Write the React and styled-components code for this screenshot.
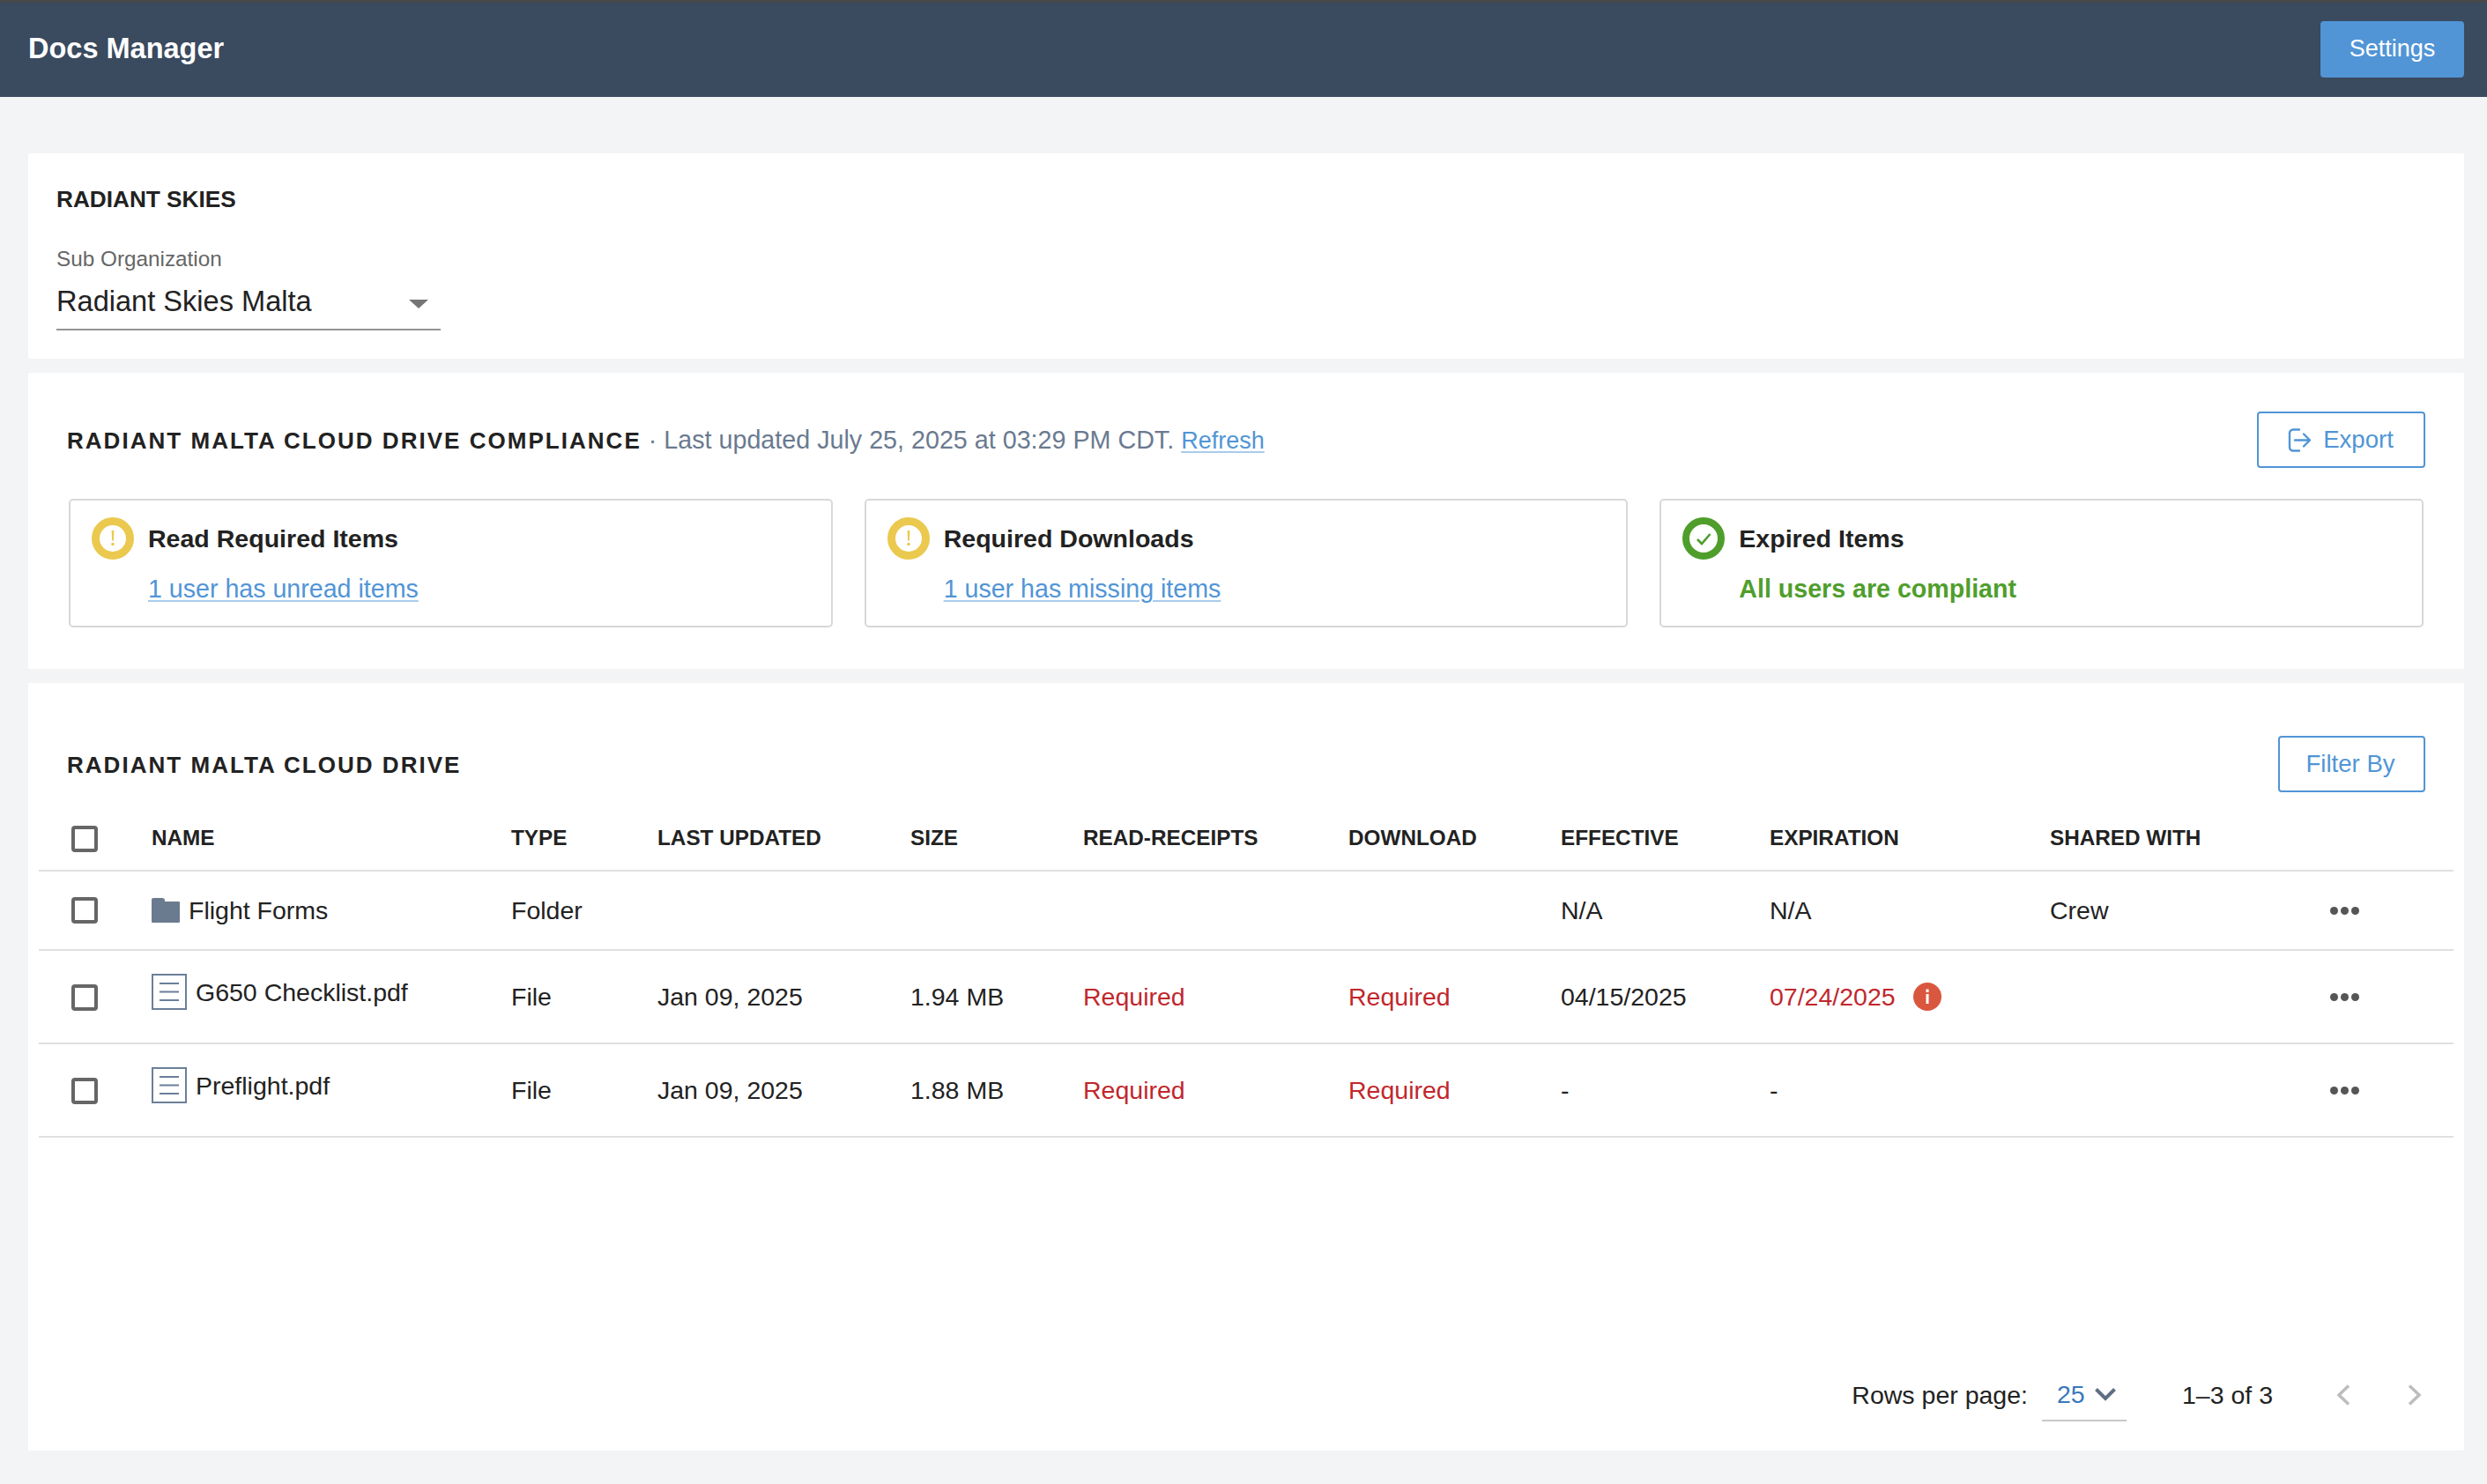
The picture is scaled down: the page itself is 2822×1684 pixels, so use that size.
import styled, { createGlobalStyle } from 'styled-components';

const GlobalStyle = createGlobalStyle`
  html, body {
    margin: 0;
    padding: 0;
    background: #f3f4f6;
    font-family: "Liberation Sans", Arial, sans-serif;
    color: #222;
  }
  * { box-sizing: border-box; }
`;

const Page = styled.div`
  width: 2822px;
  height: 1684px;
  overflow: hidden;
  background: #f3f4f6;
`;

const TopBar = styled.header`
  height: 110px;
  background: #3a4a5f;
  border-top: 3px solid #47494a;
  padding: 0 26px 0 32px;
  display: flex;
  align-items: center;
  justify-content: space-between;
`;

const AppName = styled.div`
  color: #fff;
  font-weight: 700;
  font-size: 32.5px;
  margin-top: -3px;
`;

const SettingsButton = styled.button`
  width: 163px;
  height: 64px;
  margin-top: -2px;
  border: 0;
  border-radius: 4px;
  background: #5195d6;
  color: #fff;
  font: 27px "Liberation Sans", Arial, sans-serif;
`;

const Main = styled.main`
  padding: 64px 26px 0 32px;
  display: flex;
  flex-direction: column;
  gap: 16px;
`;

const Panel = styled.section`
  background: #fff;
  border-radius: 2px;
  height: ${(p) => p.$height}px;
  display: flex;
  flex-direction: column;
`;

const OrgPanel = styled(Panel)`
  padding: 37px 32px 0;
`;

const OrgTitle = styled.h2`
  margin: 0;
  font-size: 26.2px;
  line-height: 30px;
  font-weight: 700;
  color: #222;
`;

const FieldLabel = styled.div`
  margin-top: 38px;
  font-size: 24.3px;
  line-height: 30px;
  color: #666;
`;

const OrgSelect = styled.div`
  margin-top: 2px;
  width: 436px;
  height: 64px;
  border-bottom: 2px solid #949494;
  display: flex;
  align-items: center;
  justify-content: space-between;
  padding-right: 14px;
  font-size: 32.6px;
  color: #222;
`;

const Caret = styled.span`
  width: 0;
  height: 0;
  margin-top: 6px;
  border-left: 11px solid transparent;
  border-right: 11px solid transparent;
  border-top: 10px solid #757575;
`;

const HeadingRow = styled.div`
  display: flex;
  align-items: center;
  justify-content: space-between;
  padding: ${(p) => p.$top}px 44px 0 44px;
`;

const SectionTitle = styled.h2`
  margin: ${(p) => p.$drop || 0}px 0 0;
  display: inline;
  font-size: 26px;
  font-weight: 700;
  letter-spacing: 2.03px;
  color: #222;
`;

const Updated = styled.span`
  font-size: 28.7px;
  color: #6a7a90;
`;

const TextLink = styled.a`
  color: #5195d6;
  font-size: ${(p) => p.$size || 28.6}px;
  text-decoration: underline;
  text-decoration-color: #a9cbec;
  text-decoration-thickness: 2px;
  text-underline-offset: 3px;
`;

const OutlineButton = styled.button`
  width: ${(p) => p.$width}px;
  height: 64px;
  border: 2px solid #5195d6;
  border-radius: 4px;
  background: #fff;
  color: #5195d6;
  font: 27.6px "Liberation Sans", Arial, sans-serif;
  display: flex;
  align-items: center;
  justify-content: center;
  gap: 13px;
  padding-left: ${(p) => p.$shift || 0}px;
`;

const Cards = styled.div`
  margin-top: 35px;
  padding: 0 46px;
  display: grid;
  grid-template-columns: repeat(3, 1fr);
  gap: 36px;
`;

const Card = styled.div`
  height: 146px;
  border: 2px solid #d8d8d8;
  border-radius: 5px;
  padding: 19px 24px 0;
  display: flex;
  gap: 16px;
`;

const CardTitle = styled.div`
  font-size: 28.55px;
  line-height: 48px;
  font-weight: 700;
  color: #222;
`;

const CardNote = styled.div`
  margin-top: 17px;
  line-height: 32px;
  font-size: 28.6px;
`;

const Compliant = styled.span`
  color: #4f9e2c;
  font-weight: 700;
`;

const columns = '128px 408px 166px 287px 196px 301px 241px 237px 318px 315px 1fr';

const Table = styled.div`
  margin: 0 12px;
`;

const Row = styled.div`
  display: grid;
  grid-template-columns: ${columns};
  align-items: center;
  height: ${(p) => p.$height}px;
  padding-top: ${(p) => p.$top || 0}px;
  border-bottom: 2px solid #e0e0e0;
  font-size: 28.5px;
`;

const HeadCell = styled.div`
  font-size: 24.3px;
  font-weight: 700;
  color: #222;
`;

const Cell = styled.div`
  color: ${(p) => (p.$alert ? '#c1272d' : '#222')};
  display: flex;
  align-items: center;
  gap: 20px;
`;

const CheckCell = styled.div`
  padding-left: 37px;
  padding-top: ${(p) => p.$nudge || 0}px;
  display: flex;
`;

const Checkbox = styled.span`
  width: 30px;
  height: 30px;
  border: 4px solid #666;
  border-radius: 4px;
  background: #fff;
`;

const NameCell = styled.div`
  display: flex;
  align-items: center;
  gap: ${(p) => (p.$file ? 10 : 10)}px;
  padding-bottom: ${(p) => (p.$file ? 11 : 0)}px;
  color: #222;
`;

const FileName = styled.span`
  margin-top: ${(p) => (p.$file ? 2 : 0)}px;
`;

const Dots = styled.div`
  display: flex;
  gap: 3px;
  padding-left: 3px;
`;

const Dot = styled.span`
  width: 9px;
  height: 9px;
  border-radius: 50%;
  background: #555;
`;

const Pager = styled.div`
  margin-top: auto;
  margin-bottom: 33px;
  height: 60px;
  padding-right: 48px;
  display: flex;
  align-items: center;
  justify-content: flex-end;
  font-size: 28.5px;
  color: #222;
`;

const RowsSelect = styled.div`
  width: 96px;
  height: 60px;
  margin: 0 63px 0 16px;
  padding-left: 17px;
  border-bottom: 2px solid #c8c8c8;
  color: #3a78bd;
  display: flex;
  align-items: center;
  gap: 11px;
`;

const PagerIcon = styled.svg`
  display: block;
  margin-left: ${(p) => p.$left}px;
`;

function ExportIcon() {
  return (
    <svg width="27" height="27" viewBox="0 0 27 27" fill="none" stroke="#5195d6" strokeWidth="2.4" strokeLinecap="round" strokeLinejoin="round">
      <path d="M13 1.5H6a4 4 0 0 0-4 4v16a4 4 0 0 0 4 4h7" />
      <path d="M8 13.5h17M18 6.5l7 7-7 7" />
    </svg>
  );
}

function WarnIcon() {
  return (
    <svg width="48" height="48" viewBox="0 0 48 48" style={{ flexShrink: 0 }}>
      <circle cx="24" cy="24" r="19.5" fill="#fff" stroke="#ebc94f" strokeWidth="9" />
      <path d="M22.6 15h2.8l-.5 11.5h-1.8z" fill="#ebc94f" />
      <circle cx="24" cy="30.5" r="1.8" fill="#ebc94f" />
    </svg>
  );
}

function OkIcon() {
  return (
    <svg width="48" height="48" viewBox="0 0 48 48" style={{ flexShrink: 0 }}>
      <circle cx="24" cy="24" r="20" fill="#fff" stroke="#4f9e2c" strokeWidth="8" />
      <path d="M17 25l5 5 9.5-11" fill="none" stroke="#4f9e2c" strokeWidth="2.6" />
    </svg>
  );
}

function FolderIcon() {
  return (
    <svg width="32" height="28" viewBox="0 0 32 28">
      <path d="M1 28a1 1 0 0 1-1-1V2a2 2 0 0 1 2-2h10a3 3 0 0 1 3 3v1h16a1 1 0 0 1 1 1v22a1 1 0 0 1-1 1z" fill="#6b7b8f" />
    </svg>
  );
}

function FileIcon() {
  return (
    <svg width="40" height="41" viewBox="0 0 40 41" fill="none" stroke="#6b7f99" style={{ flexShrink: 0 }}>
      <rect x="1" y="1" width="38" height="39" strokeWidth="2" />
      <path d="M9 11h22M9 20.500h22M9 30h22" strokeWidth="2" />
    </svg>
  );
}

function InfoIcon() {
  return (
    <svg width="32" height="32" viewBox="0 0 32 32" style={{ flexShrink: 0 }}>
      <circle cx="16" cy="16" r="16" fill="#d9573f" />
      <rect x="14.500" y="7.500" width="3" height="3.500" fill="#fff" />
      <rect x="14.500" y="13" width="3" height="11" fill="#fff" />
    </svg>
  );
}

function MoreDots() {
  return (
    <Dots>
      <Dot />
      <Dot />
      <Dot />
    </Dots>
  );
}

const headers = ['NAME', 'TYPE', 'LAST UPDATED', 'SIZE', 'READ-RECEIPTS', 'DOWNLOAD', 'EFFECTIVE', 'EXPIRATION', 'SHARED WITH'];

const files = [
  { name: 'Flight Forms', type: 'Folder', updated: '', size: '', read: '', download: '', effective: 'N/A', expiration: 'N/A', shared: 'Crew', height: 90 },
  { name: 'G650 Checklist.pdf', file: true, type: 'File', updated: 'Jan 09, 2025', size: '1.94 MB', read: 'Required', download: 'Required', effective: '04/15/2025', expiration: '07/24/2025', expired: true, shared: '', height: 106 },
  { name: 'Preflight.pdf', file: true, type: 'File', updated: 'Jan 09, 2025', size: '1.88 MB', read: 'Required', download: 'Required', effective: '-', expiration: '-', shared: '', height: 106 },
];

export default function App() {
  return (
    <Page>
      <GlobalStyle />
      <TopBar>
        <AppName>Docs Manager</AppName>
        <SettingsButton>Settings</SettingsButton>
      </TopBar>
      <Main>
        <OrgPanel $height={233}>
          <OrgTitle>RADIANT SKIES</OrgTitle>
          <FieldLabel>Sub Organization</FieldLabel>
          <OrgSelect>
            Radiant Skies Malta
            <Caret />
          </OrgSelect>
        </OrgPanel>

        <Panel $height={336}>
          <HeadingRow $top={44}>
            <div>
              <SectionTitle>RADIANT MALTA CLOUD DRIVE COMPLIANCE</SectionTitle>
              <Updated> · Last updated July 25, 2025 at 03:29 PM CDT. </Updated>
              <TextLink href="#" $size={27}>Refresh</TextLink>
            </div>
            <OutlineButton $width={191} $shift={5}>
              <ExportIcon />
              Export
            </OutlineButton>
          </HeadingRow>
          <Cards>
            <Card>
              <WarnIcon />
              <div>
                <CardTitle>Read Required Items</CardTitle>
                <CardNote>
                  <TextLink href="#">1 user has unread items</TextLink>
                </CardNote>
              </div>
            </Card>
            <Card>
              <WarnIcon />
              <div>
                <CardTitle>Required Downloads</CardTitle>
                <CardNote>
                  <TextLink href="#">1 user has missing items</TextLink>
                </CardNote>
              </div>
            </Card>
            <Card>
              <OkIcon />
              <div>
                <CardTitle>Expired Items</CardTitle>
                <CardNote>
                  <Compliant>All users are compliant</Compliant>
                </CardNote>
              </div>
            </Card>
          </Cards>
        </Panel>

        <Panel $height={871}>
          <HeadingRow $top={60}>
            <SectionTitle $drop={3}>RADIANT MALTA CLOUD DRIVE</SectionTitle>
            <OutlineButton $width={167} $shift={3}>Filter By</OutlineButton>
          </HeadingRow>
          <Table>
            <Row $height={90} $top={16}>
              <CheckCell $nudge={2}>
                <Checkbox />
              </CheckCell>
              {headers.map((h) => (
                <HeadCell key={h}>{h}</HeadCell>
              ))}
            </Row>
            {files.map((f) => (
              <Row key={f.name} $height={f.height}>
                <CheckCell $nudge={f.file ? 2 : 0}>
                  <Checkbox />
                </CheckCell>
                <NameCell $file={f.file}>
                  {f.file ? <FileIcon /> : <FolderIcon />}
                  <FileName $file={f.file}>{f.name}</FileName>
                </NameCell>
                <Cell>{f.type}</Cell>
                <Cell>{f.updated}</Cell>
                <Cell>{f.size}</Cell>
                <Cell $alert>{f.read}</Cell>
                <Cell $alert>{f.download}</Cell>
                <Cell>{f.effective}</Cell>
                <Cell $alert={f.expired}>
                  {f.expiration}
                  {f.expired && <InfoIcon />}
                </Cell>
                <Cell>{f.shared}</Cell>
                <MoreDots />
              </Row>
            ))}
          </Table>
          <Pager>
            Rows per page:
            <RowsSelect>
              25
              <svg width="24" height="15" viewBox="0 0 24 15" fill="none" stroke="#5f6f82" strokeWidth="4">
                <path d="M1.500 1.500L12 12l10.500-10.500" />
              </svg>
            </RowsSelect>
            1–3 of 3
            <PagerIcon $left={72} width="17" height="24" viewBox="0 0 17 24" fill="none" stroke="#bdbdbd" strokeWidth="3.500">
              <path d="M14 1.500L3 12l11 10.500" />
            </PagerIcon>
            <PagerIcon $left={63} width="17" height="24" viewBox="0 0 17 24" fill="none" stroke="#bdbdbd" strokeWidth="3.500">
              <path d="M3 1.500L14 12 3 22.500" />
            </PagerIcon>
          </Pager>
        </Panel>
      </Main>
    </Page>
  );
}
